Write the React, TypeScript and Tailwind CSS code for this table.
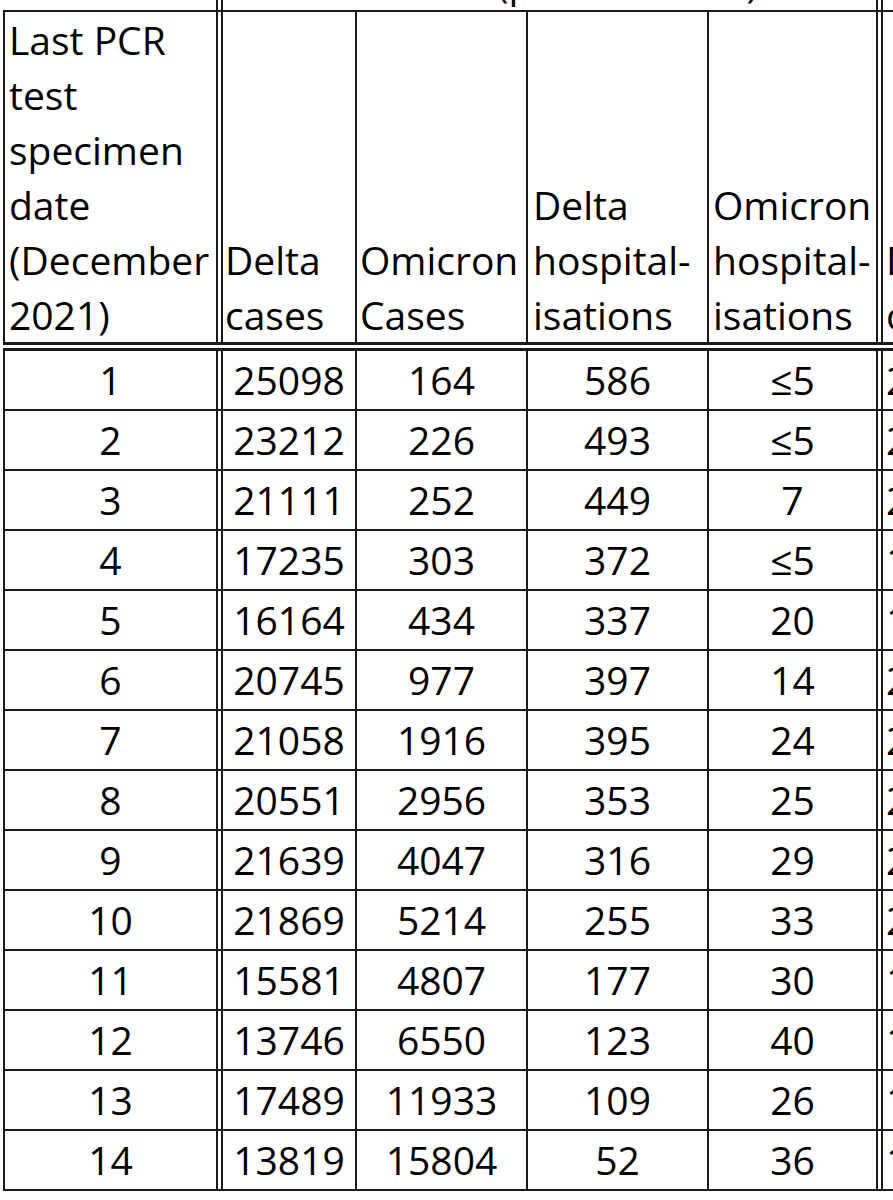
import React from 'react';

const FONT = { fontFamily: '"Open Sans", "DejaVu Sans", sans-serif' };

const HEADERS = [
  { key: 'date', lines: ['Last PCR', 'test', 'specimen', 'date', '(December', '2021)'] },
  { key: 'deltaCases', lines: ['Delta', 'cases'] },
  { key: 'omicronCases', lines: ['Omicron', 'Cases'] },
  { key: 'deltaHosp', lines: ['Delta', 'hospital-', 'isations'] },
  { key: 'omicronHosp', lines: ['Omicron', 'hospital-', 'isations'] },
  { key: 'next', lines: ['D', 'c'] },
];

// day, delta cases, omicron cases, delta hosp, omicron hosp, first digit of the cut-off column
const ROWS: [string, string, string, string, string, string][] = [
  ['1', '25098', '164', '586', '≤5', '2'],
  ['2', '23212', '226', '493', '≤5', '2'],
  ['3', '21111', '252', '449', '7', '2'],
  ['4', '17235', '303', '372', '≤5', '1'],
  ['5', '16164', '434', '337', '20', '1'],
  ['6', '20745', '977', '397', '14', '2'],
  ['7', '21058', '1916', '395', '24', '2'],
  ['8', '20551', '2956', '353', '25', '2'],
  ['9', '21639', '4047', '316', '29', '2'],
  ['10', '21869', '5214', '255', '33', '2'],
  ['11', '15581', '4807', '177', '30', '1'],
  ['12', '13746', '6550', '123', '40', '1'],
  ['13', '17489', '11933', '109', '26', '1'],
  ['14', '13819', '15804', '52', '36', '1'],
];

// border-box widths + borders per column
const COLS = [
  'w-[220px] shrink-0 border-l-2 border-r-[7px] border-double border-l-solid',
  'w-[134px] shrink-0 border-r-2',
  'w-[171px] shrink-0 border-r-2',
  'w-[181px] shrink-0 border-r-2',
  'w-[174px] shrink-0 border-r-[7px] border-double',
  'w-[150px] shrink-0',
];

const HEAD_PAD = ['pl-[4px]', 'pl-[2px]', 'pl-[3px]', 'pl-[5px]', 'pl-[4px]', 'pl-[3px]'];

export default function App(): React.JSX.Element {
  return (
    <div className="h-[1200px] w-[893px] overflow-hidden bg-white text-black" style={FONT}>
      <div className="-mt-[48px] w-[1100px] pl-[3px] text-[39px] border-[#1a1a1a]">
        {/* group header row, almost entirely cropped off */}
        <div className="flex h-[58px]">
          <div className="w-[220px] shrink-0 border-r-[7px] border-double border-[#1a1a1a]" />
          <div className="flex w-[660px] shrink-0 items-end border-r-[7px] border-double border-[#1a1a1a] pl-[274px] leading-[55px] whitespace-nowrap">
            (positive tests)
          </div>
          <div className="w-[150px] shrink-0" />
        </div>

        {/* column headers */}
        <div className="flex h-[341px] border-t-2 border-b-[9px] border-double border-[#1a1a1a] [border-top-style:solid]">
          {HEADERS.map((h, i) => (
            <div
              key={h.key}
              className={`${COLS[i]} ${HEAD_PAD[i]} flex flex-col justify-end border-[#1a1a1a] leading-[55px]`}
            >
              {h.lines.map((line) => (
                <div key={line} className="whitespace-nowrap">
                  {line}
                </div>
              ))}
            </div>
          ))}
        </div>

        {/* data rows */}
        {ROWS.map((row) => (
          <div key={row[0]} className="flex h-[60px] border-b-2 border-[#1a1a1a]">
            {row.map((cell, i) => (
              <div
                key={i}
                className={`${COLS[i]} flex items-center border-[#1a1a1a] leading-[58px] ${
                  i === 5 ? 'justify-start pl-[3px]' : 'justify-center'
                }`}
              >
                {cell}
              </div>
            ))}
          </div>
        ))}
      </div>
    </div>
  );
}
